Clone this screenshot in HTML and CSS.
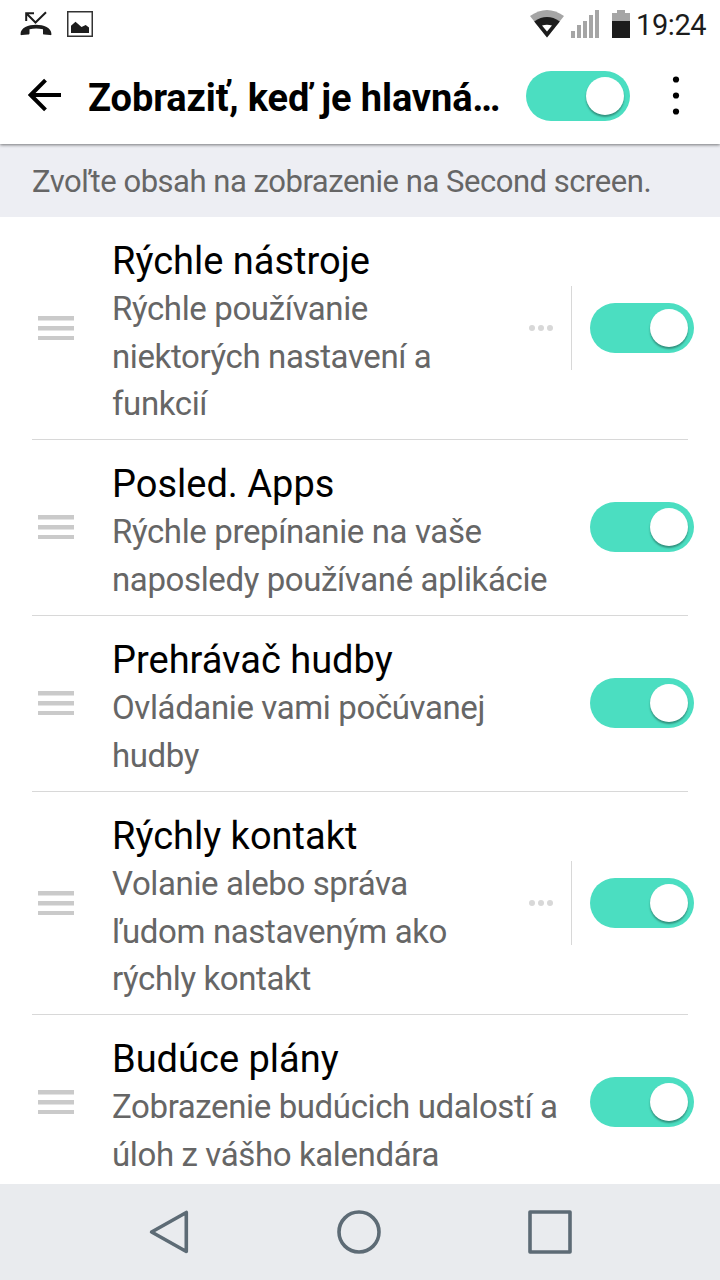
FILE: index.html
```html
<!DOCTYPE html>
<html lang="sk">
<head>
    <meta charset="UTF-8">
    <meta name="viewport" content="width=device-width, initial-scale=1.0">
    <title>Second screen</title>
    <link rel="stylesheet" href="styles.css">
</head>
<body>
    <div class="screen">
        <header class="top">
            <div class="statusbar">
                <svg class="icon-missed" width="32" height="26" viewBox="0 0 32 26">
                    <path d="M6.2 10V2.2H14M6.5 2.5L15.5 11.5L26 1.2" fill="none" stroke="#1c1c1c" stroke-width="2"/>
                    <path d="M0.6 23.5C-0.4 10.5 32.4 10.5 31.4 23.5C31.4 24.3 30.8 24.2 30 24.1L24.2 23.6C23.2 23.5 23 23 23 22.2V18.2Q16 17 9.5 18.2V22.2C9.5 23 9 23.5 8 23.6L2 24.1C1.2 24.2 0.6 24.3 0.6 23.5Z" fill="#1c1c1c"/>
                </svg>
                <svg class="icon-image" width="26" height="26" viewBox="0 0 26 26">
                    <rect x="0.75" y="0.75" width="24.5" height="24.5" fill="none" stroke="#333" stroke-width="1.5"/>
                    <path d="M4 22V14.8L8.5 10.8L14.5 16L18.7 14L22 16.5V22Z" fill="#1c1c1c"/>
                </svg>
                <div class="status-right">
                    <svg class="icon-wifi" width="34" height="28" viewBox="0 0 34 28">
                        <path d="M17 27.5L0 6Q17-6 34 6Z" fill="#a5a5a5"/>
                        <path d="M17 27.5L4.2 11.4Q17 2.6 29.8 11.4Z" fill="#1c1c1c"/>
                        <path d="M12 15.4Q17 14.3 22 15.4L17 21.5Z" fill="#fff"/>
                    </svg>
                    <svg class="icon-signal" width="28" height="28" viewBox="0 0 28 28">
                        <path d="M0 21h4v7H0zM6 15h4v13H6zM12 11h4v17h-4zM18 5h4v23h-4zM24 0h4v28h-4z" fill="#a5a5a5"/>
                    </svg>
                    <svg class="icon-battery" width="18" height="28" viewBox="0 0 18 28">
                        <path d="M5 0h8v3h5v8H0V3h5z" fill="#a5a5a5"/>
                        <path d="M0 11h18v17H0z" fill="#1c1c1c"/>
                    </svg>
                    <span class="clock">19:24</span>
                </div>
            </div>
            <div class="appbar">
                <svg class="icon-back" width="34" height="34" viewBox="0 0 34 34">
                    <path d="M17.5 2.2L2.7 17L17.5 31.8M2.7 17H33" fill="none" stroke="#000" stroke-width="4"/>
                </svg>
                <h1>Zobraziť, keď je hlavná…</h1>
                <div class="toggle"></div>
                <svg class="icon-more" width="8" height="40" viewBox="0 0 8 40">
                    <circle cx="4" cy="3.5" r="3.1"/>
                    <circle cx="4" cy="19.5" r="3.1"/>
                    <circle cx="4" cy="35.5" r="3.1"/>
                </svg>
            </div>
        </header>

        <p class="hint">Zvoľte obsah na zobrazenie na Second screen.</p>

        <main class="list">
            <div class="row tall">
                <div class="handle"><i></i><i></i><i></i></div>
                <div class="text">
                    <h2>Rýchle nástroje</h2>
                    <p>Rýchle používanie<br>niektorých nastavení a<br>funkcií</p>
                </div>
                <div class="dots"><i></i><i></i><i></i></div>
                <div class="toggle"></div>
            </div>
            <div class="row">
                <div class="handle"><i></i><i></i><i></i></div>
                <div class="text">
                    <h2>Posled. Apps</h2>
                    <p>Rýchle prepínanie na vaše<br>naposledy používané aplikácie</p>
                </div>
                <div class="toggle"></div>
            </div>
            <div class="row">
                <div class="handle"><i></i><i></i><i></i></div>
                <div class="text">
                    <h2>Prehrávač hudby</h2>
                    <p>Ovládanie vami počúvanej<br>hudby</p>
                </div>
                <div class="toggle"></div>
            </div>
            <div class="row tall">
                <div class="handle"><i></i><i></i><i></i></div>
                <div class="text">
                    <h2>Rýchly kontakt</h2>
                    <p>Volanie alebo správa<br>ľudom nastaveným ako<br>rýchly kontakt</p>
                </div>
                <div class="dots"><i></i><i></i><i></i></div>
                <div class="toggle"></div>
            </div>
            <div class="row">
                <div class="handle"><i></i><i></i><i></i></div>
                <div class="text">
                    <h2>Budúce plány</h2>
                    <p>Zobrazenie budúcich udalostí a<br>úloh z vášho kalendára</p>
                </div>
                <div class="toggle"></div>
            </div>
        </main>

        <nav class="navbar">
            <svg width="44" height="44" viewBox="0 0 44 44">
                <path d="M40.3 2.5V41.5L5.6 22Z"/>
            </svg>
            <svg width="44" height="44" viewBox="0 0 44 44">
                <circle cx="22" cy="22" r="20"/>
            </svg>
            <svg width="44" height="44" viewBox="0 0 44 44">
                <rect x="2" y="2" width="40" height="40"/>
            </svg>
        </nav>
    </div>
</body>
</html>
```

FILE: styles.css
```css
* {
    box-sizing: border-box;
}
body {
    margin: 0;
    font-family: Roboto, sans-serif;
    background: #fff;
}
h1, h2, p {
    margin: 0;
    font-weight: 400;
    white-space: nowrap;
}
svg {
    display: block;
    flex: none;
}
.screen {
    width: 720px;
    height: 1280px;
    display: flex;
    flex-direction: column;
    overflow: hidden;
}
.top {
    position: relative;
    z-index: 1;
    flex: none;
    height: 144px;
    background: #fff;
    box-shadow: 0 1px 3px rgba(0, 0, 0, 0.5);
}

/* status bar */
.statusbar {
    height: 48px;
    padding: 0 15px 0 20px;
    display: flex;
    align-items: center;
}
.icon-image {
    margin-left: 15px;
}
.status-right {
    display: flex;
    align-items: center;
    margin-left: auto;
}
.icon-signal {
    margin-left: 7px;
}
.icon-battery {
    margin: 0 6px 0 13px;
}
.clock {
    width: 69px;
    font-size: 29px;
    letter-spacing: -0.4px;
    line-height: 48px;
    padding-top: 2px;
    color: #1c1c1c;
}

/* app bar */
.appbar {
    height: 96px;
    display: flex;
    align-items: center;
    padding-left: 28px;
}
.icon-back {
    margin-top: -2px;
}
h1 {
    width: 438px;
    padding: 4px 0 0 26px;
    font-size: 38px;
    font-weight: 700;
    letter-spacing: -0.12px;
    line-height: 48px;
    color: #000;
}
.appbar .toggle {
    margin-left: 26px;
}
.icon-more {
    margin-left: 42px;
}

.hint {
    flex: none;
    height: 73px;
    padding-left: 32px;
    font-size: 31px;
    letter-spacing: -0.47px;
    line-height: 76px;
    color: #666;
    background: #edeef3;
}

/* list */
.list {
    flex: 1;
    min-height: 0;
    overflow: hidden;
}
.row {
    display: flex;
    align-items: center;
    height: 176px;
    margin: 0 32px;
    padding: 0 0 1px 6px;
    border-bottom: 1px solid #d8d8d8;
}
.row.tall {
    height: 223px;
    padding-bottom: 0;
}
.handle {
    display: flex;
    flex-direction: column;
    gap: 5px;
    width: 36px;
    flex: none;
}
.handle i {
    height: 5px;
    background: #cacaca;
    border-bottom: 1px solid #e4e4e4;
}
.handle i:last-child {
    height: 4px;
    border: 0;
}
.text {
    align-self: flex-start;
    flex: 1;
    min-width: 0;
    margin-left: 38px;
    padding-top: 20px;
}
h2 {
    font-size: 38px;
    line-height: 48px;
    color: #000;
}
.text p {
    font-size: 33px;
    letter-spacing: -0.38px;
    line-height: 47.5px;
    color: #666;
}
.dots {
    display: flex;
    align-items: center;
    gap: 3.3px;
    width: 43.5px;
    height: 84px;
    flex: none;
    margin-right: 18px;
    border-right: 1px solid #d8d8d8;
}
.dots i {
    width: 6px;
    height: 6px;
    border-radius: 50%;
    background: #d8d8d8;
}
.row .toggle {
    margin-right: -6px;
}

.toggle {
    position: relative;
    flex: none;
    width: 104px;
    height: 50px;
    border-radius: 25px;
    background: #4bdec1;
}
.toggle::after {
    content: "";
    position: absolute;
    top: 6px;
    right: 6px;
    width: 38px;
    height: 38px;
    border-radius: 50%;
    background: #fff;
    box-shadow: 0 2px 2px rgba(0, 0, 0, 0.35);
}

/* navigation */
.navbar {
    flex: none;
    height: 96px;
    display: flex;
    justify-content: center;
    align-items: center;
    gap: 147px;
    padding-right: 2px;
    background: #e9ebee;
}
.navbar svg {
    fill: none;
    stroke: #5d6b75;
    stroke-width: 3.6;
    stroke-linejoin: round;
}
```
